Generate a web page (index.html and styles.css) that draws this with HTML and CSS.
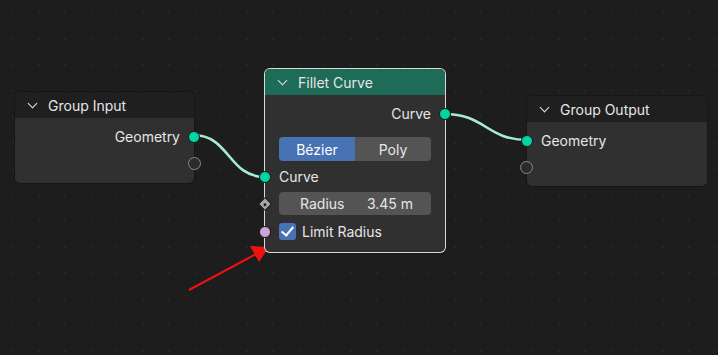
FILE: index.html
```html
<!DOCTYPE html>
<html>
    <head>
        <meta charset="UTF-8">
        <title>Fillet Curve</title>
        <link rel="stylesheet" href="styles.css">
    </head>
    <body>
        <div class="editor">
            <svg class="links" width="718" height="355">
                <path d="M193 135 C 230 135, 228 177, 265 177" />
                <path d="M444 114 C 486 114, 486 140, 528 140" />
                <line class="arrow" x1="189" y1="290" x2="256" y2="254" />
                <polygon class="arrow-head" points="269,247 250,246 259,262" />
            </svg>

            <div class="node group-input">
                <div class="node-header"><span class="chev"></span>Group Input</div>
                <div class="row out">Geometry<span class="socket geo"></span></div>
                <div class="row out"><span class="socket empty"></span></div>
            </div>

            <div class="node fillet selected">
                <div class="node-header green"><span class="chev"></span>Fillet Curve</div>
                <div class="row out">Curve<span class="socket geo"></span></div>
                <div class="seg">
                    <div class="seg-btn active">Bézier</div>
                    <div class="seg-btn">Poly</div>
                </div>
                <div class="row in"><span class="socket geo"></span>Curve</div>
                <div class="row in field-row">
                    <span class="socket diamond"></span>
                    <div class="field"><span>Radius</span><span>3.45 m</span></div>
                </div>
                <div class="row in check-row"><span class="socket bool"></span><span class="check"></span>Limit Radius</div>
            </div>

            <div class="node group-output">
                <div class="node-header"><span class="chev"></span>Group Output</div>
                <div class="row in"><span class="socket geo"></span>Geometry</div>
                <div class="row in"><span class="socket empty"></span></div>
            </div>
        </div>
    </body>
</html>
```
FILE: styles.css
```css
body {
    margin: 0;
    padding: 0;
    background-color: #1d1d1d;
    font-family: Inter, "DejaVu Sans", sans-serif;
    font-size: 14px;
    color: #e6e6e6;
}
.editor {
    position: relative;
    width: 718px;
    height: 355px;
    overflow: hidden;
    background-color: #1d1d1d;
    background-image: radial-gradient(#262626 1px, transparent 1px);
    background-size: 26px 26px;
}
.links {
    position: absolute;
    left: 0;
    top: 0;
    z-index: 0;
    pointer-events: none;
}
.links path {
    fill: none;
    stroke: #a6ecd2;
    stroke-width: 2.6;
}
.arrow {
    stroke: #ee1111;
    stroke-width: 2;
}
.arrow-head {
    fill: #ee1111;
}
.node {
    position: absolute;
    width: 179px;
    background-color: #303030;
    border-radius: 5px;
    box-shadow: 0 0 0 1px #161616;
    z-index: 1;
}
.node.selected {
    box-shadow: 0 0 0 1px #dadada;
}
.group-input {
    left: 15px;
    top: 92px;
    height: 91px;
}
.fillet {
    left: 265px;
    top: 69px;
    width: 180px;
    height: 183px;
}
.group-output {
    left: 527px;
    top: 96px;
    width: 180px;
    height: 90px;
}
.node-header {
    height: 26px;
    display: flex;
    align-items: center;
    background-color: #1f1f1f;
    border-radius: 5px 5px 0 0;
    padding-left: 14px;
    margin-bottom: 5px;
}
.node-header.green {
    background-color: #1e6b58;
}
.chev {
    width: 6px;
    height: 6px;
    border-right: 1.5px solid #e0e0e0;
    border-bottom: 1.5px solid #e0e0e0;
    transform: rotate(45deg);
    margin: -4px 12px 0 0;
}
.row {
    position: relative;
    height: 27px;
    display: flex;
    align-items: center;
}
.row.out {
    justify-content: flex-end;
    padding-right: 14px;
}
.row.in {
    padding-left: 14px;
}
.check-row {
    margin-top: 1px;
}
.socket {
    position: absolute;
    z-index: 3;
    width: 12px;
    height: 12px;
    border-radius: 50%;
    box-sizing: border-box;
    border: 1px solid #1a1a1a;
}
.row.out .socket {
    right: -6px;
}
.row.in .socket {
    left: -6px;
}
.socket.geo {
    background-color: #00d6a3;
}
.row.out .socket.empty,
.row.in .socket.empty {
    background-color: #2b2b2b;
    border: 1.5px solid #8a8a8a;
    width: 13px;
    height: 13px;
}
.row.out .socket.empty {
    right: -7px;
}
.row.in .socket.empty {
    left: -7px;
}
.socket.bool {
    background-color: #cca6d6;
}
.row.in .socket.diamond {
    width: 10px;
    height: 10px;
    border-radius: 1px;
    background-color: #a8a8a8;
    border: 1px solid #1a1a1a;
    transform: rotate(45deg);
    left: -5px;
}
.socket.diamond::after {
    content: "";
    position: absolute;
    left: 2.5px;
    top: 2.5px;
    width: 3px;
    height: 3px;
    border-radius: 50%;
    background-color: #222222;
}
.seg {
    display: flex;
    margin: 10px 14px 2px 14px;
    height: 24px;
    border-radius: 4px;
    overflow: hidden;
}
.seg-btn {
    flex: 1;
    display: flex;
    align-items: center;
    justify-content: center;
    background-color: #545454;
}
.seg-btn.active {
    background-color: #4772b3;
    color: #ffffff;
}
.field-row {
    padding-right: 14px;
}
.field {
    flex: 1;
    height: 23px;
    border-radius: 4px;
    background-color: #545454;
    display: flex;
    align-items: center;
    justify-content: space-between;
    padding: 0 18px 0 21px;
}
.check {
    width: 17px;
    height: 17px;
    border-radius: 3px;
    background-color: #4772b3;
    margin-right: 6px;
    position: relative;
}
.check::after {
    content: "";
    position: absolute;
    left: 5px;
    top: 1px;
    width: 5px;
    height: 10px;
    border-right: 2px solid #ffffff;
    border-bottom: 2px solid #ffffff;
    transform: rotate(40deg);
}
```
